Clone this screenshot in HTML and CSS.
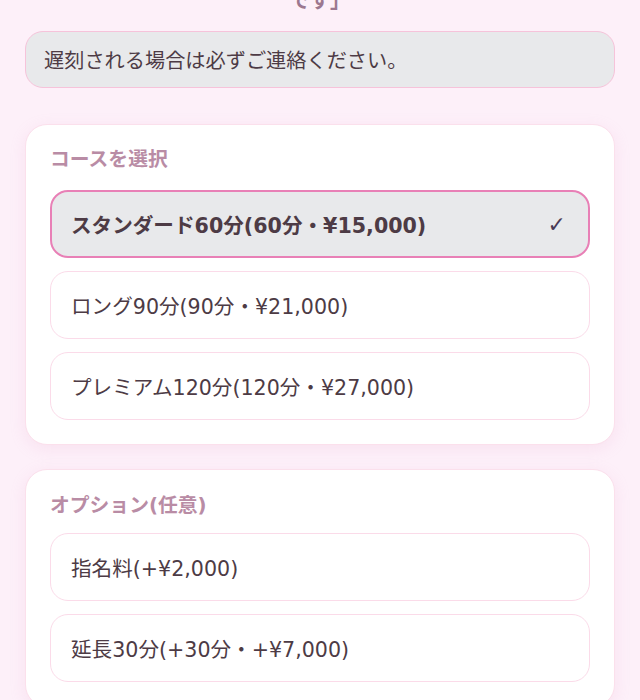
FILE: index.html
```html
<!DOCTYPE html>
<html lang="ja">
<head>
<meta charset="utf-8">
<link rel="stylesheet" href="styles.css">
</head>
<body>
<div class="page">
  <p class="intro">です」</p>
  <div class="notice">遅刻される場合は必ずご連絡ください。</div>

  <section class="card">
    <h2 class="label">コースを選択</h2>
    <div class="options">
      <div class="option selected"><span>スタンダード60分(60分・¥15,000)</span><span class="check">✓</span></div>
      <div class="option"><span>ロング90分(90分・¥21,000)</span></div>
      <div class="option"><span>プレミアム120分(120分・¥27,000)</span></div>
    </div>
  </section>

  <section class="card">
    <h2 class="label label-opt">オプション(任意)</h2>
    <div class="options">
      <div class="option"><span>指名料(+¥2,000)</span></div>
      <div class="option"><span>延長30分(+30分・+¥7,000)</span></div>
    </div>
  </section>
</div>
</body>
</html>
```

FILE: styles.css
```css
* { box-sizing: border-box; }
html, body {
  margin: 0;
  padding: 0;
  background: #fdf0f9;
}
body {
  font-family: "DejaVu Sans", "Noto Sans CJK JP", sans-serif;
  color: #4d3b45;
}
.page {
  padding: 0 25px 40px;
  display: flex;
  flex-direction: column;
}
.intro {
  margin: -9px 0 0;
  text-align: center;
  font-size: 20px;
  line-height: 20px;
  height: 20px;
  font-weight: 700;
  color: #9c7890;
}
.notice {
  margin-top: 20px;
  height: 57px;
  display: flex;
  align-items: center;
  padding: 0 18px;
  background: #e8e9eb;
  border: 1px solid #f6c3da;
  border-radius: 18px;
  font-size: 20.2px;
  color: #4d3b45;
}
.card {
  margin-top: 36px;
  background: #ffffff;
  border: 1px solid #fbe0ec;
  border-radius: 22px;
  padding: 22px 24px 24px;
  box-shadow: 0 4px 16px rgba(225, 150, 190, 0.16);
}
.card + .card { margin-top: 24px; }
.label {
  margin: 0 0 17px;
  font-size: 19.8px;
  line-height: 26px;
  font-weight: 700;
  color: #b98ca5;
}
.label-opt { margin-top: 1px; margin-bottom: 14px; }
.options {
  display: flex;
  flex-direction: column;
  gap: 13px;
}
.option {
  height: 68px;
  display: flex;
  align-items: center;
  justify-content: space-between;
  padding: 0 22px 0 20px;
  border: 1px solid #fbdbe9;
  border-radius: 18px;
  background: #ffffff;
  font-size: 20.6px;
  color: #4d3b45;
}
.option.selected {
  background: #e8e9eb;
  border: 2px solid #e880b6;
  padding-left: 19px;
  font-weight: 700;
}
.check {
  font-size: 22px;
  font-weight: 700;
  color: #4a3a55;
  margin-right: 0;
}
```
